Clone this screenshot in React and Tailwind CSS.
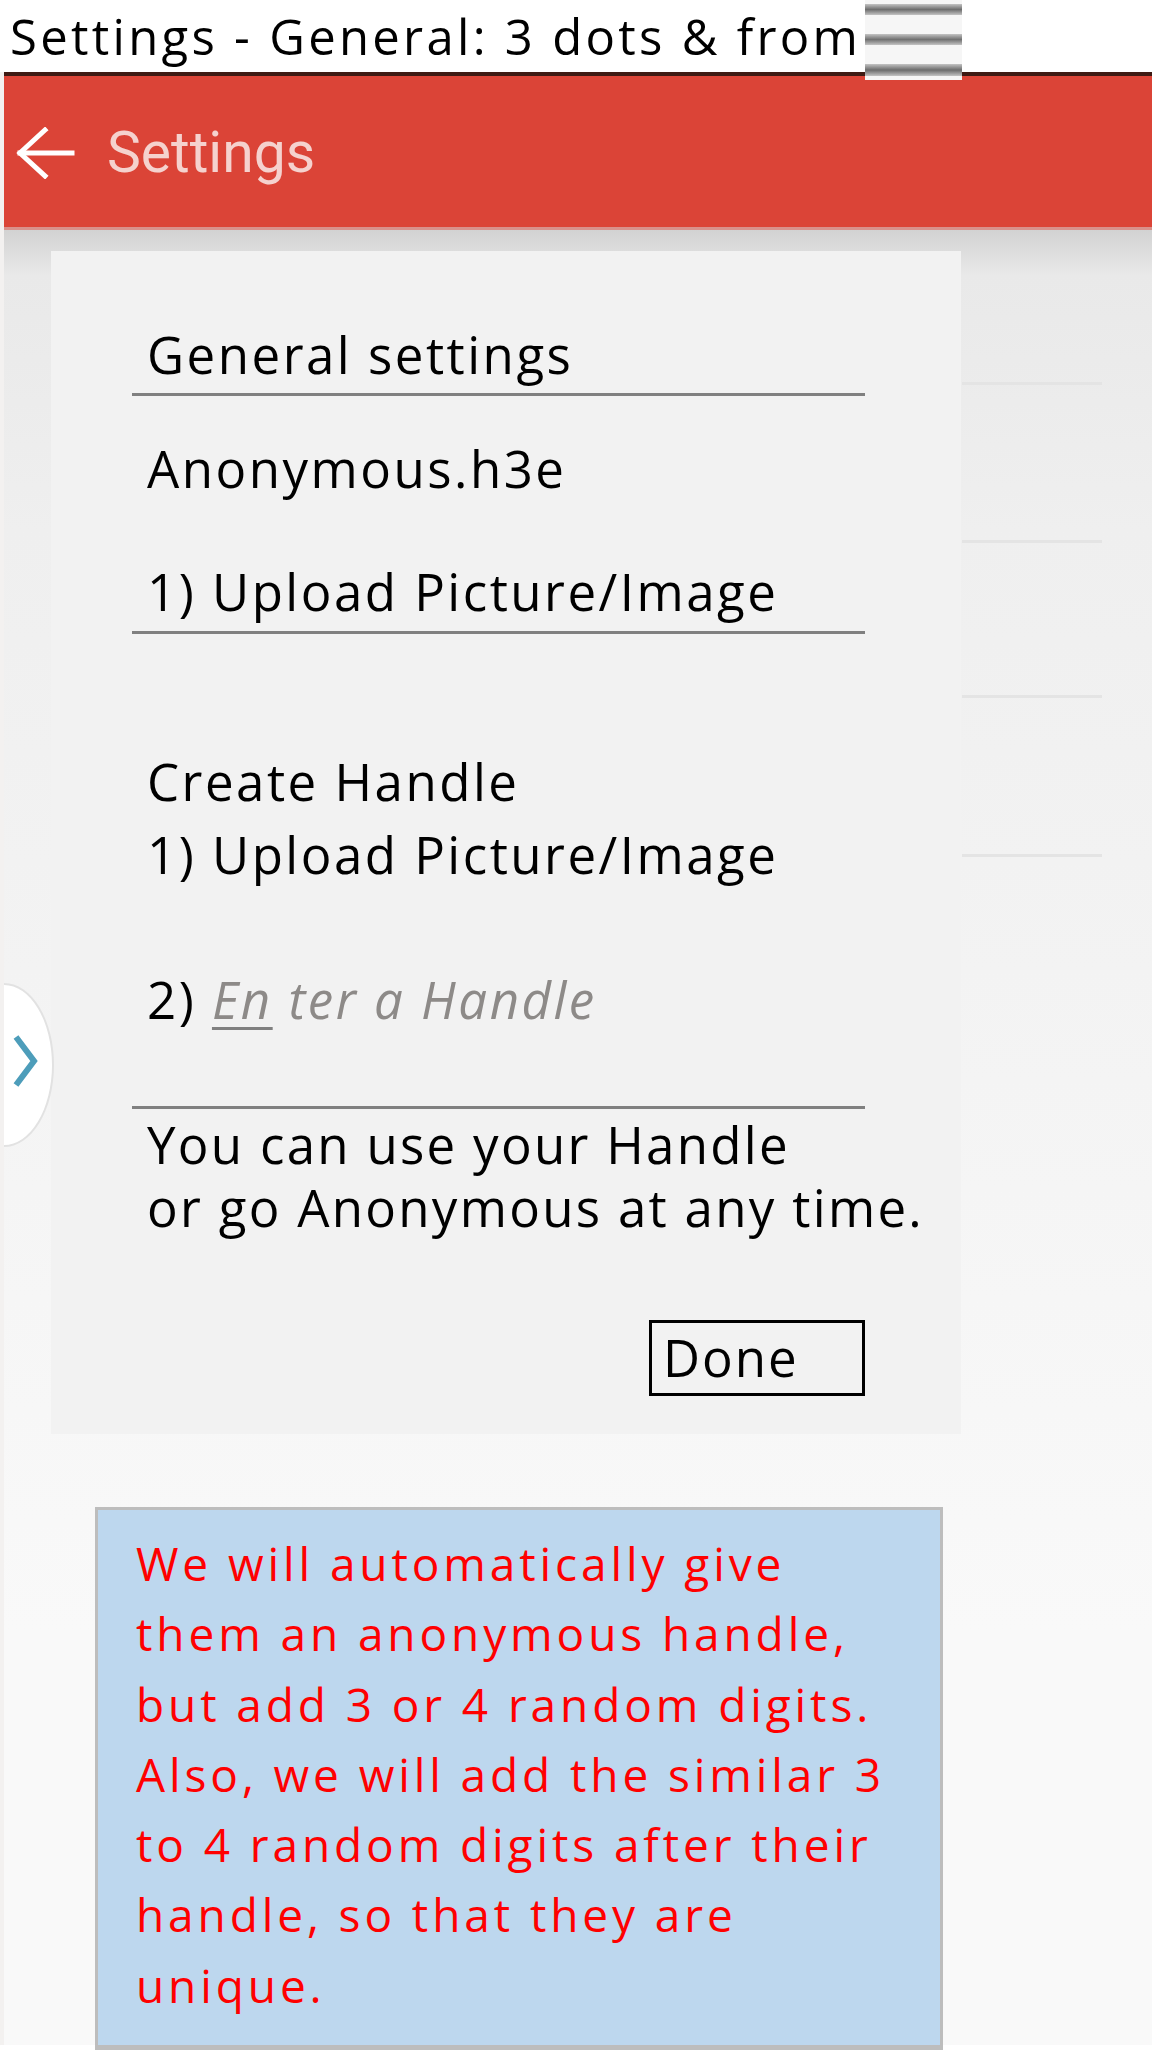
const CardLine = ({ children, className = "" }) => (
  <div className={`text-[51px] leading-[60px] text-black tracking-[2.5px] ${className}`}>{children}</div>
);

const Rule = ({ className = "" }) => <div className={`h-[3px] w-[733px] bg-[#808080] ${className}`} />;

const App = () => {
  return (
    <div className="relative w-[1152px] h-[2072px] bg-white overflow-hidden" style={{ fontFamily: '"Open Sans", "Liberation Sans", sans-serif' }}>
      {/* title strip */}
      <div className="h-[72px] pl-[10px] text-[49px] leading-[72px] tracking-[3.3px] text-black">
        Settings - General: 3 dots &amp; from
      </div>
      <div className="absolute left-[865px] top-0 w-[97px] h-[80px] bg-[#f6f6f6] flex flex-col justify-between py-[4px]">
        <div className="h-[11px] bg-gradient-to-b from-[#c4c4c4] via-[#6f6f6f] to-[#c4c4c4]" />
        <div className="h-[11px] bg-gradient-to-b from-[#c4c4c4] via-[#727272] to-[#c4c4c4]" />
        <div className="h-[12px] bg-gradient-to-b from-[#c4c4c4] via-[#6c6c6c] to-[#c4c4c4]" />
      </div>

      <div className="pl-[4px] bg-[#f3f1f0]">
        <div className="h-[4px] bg-[#3e1a13]" />
        {/* app bar */}
        <div className="h-[154px] bg-[#db4437] border-b-[3px] border-[#d9918b] flex items-center pl-[11px] pt-[2px]">
          <svg width="60" height="52" viewBox="0 0 60 52" fill="none" stroke="#ffffff" strokeWidth="5" strokeLinecap="square">
            <path d="M5 26 H57" />
            <path d="M30 3 L5 26 L30 49" />
          </svg>
          <span className="ml-[32px] text-[57px] leading-[57px] text-[#f5d2ce]" style={{ fontFamily: 'Roboto, "Open Sans", sans-serif' }}>
            Settings
          </span>
        </div>

        {/* body */}
        <div className="relative h-[1815px] bg-[linear-gradient(to_bottom,#d2d2d2_0px,#e9e9e9_45px,#efefef_300px,#f9f9f9_1400px)] pt-[21px] pl-[47px]">
          <div className="flex">
            <div className="w-[910px] bg-[#f2f2f2] pt-[73px] pb-[38px]">
              <CardLine className="pl-[96px]">General settings</CardLine>
              <Rule className="ml-[81px] mt-[9px]" />
              <CardLine className="pl-[96px] mt-[42px]">Anonymous.h3e</CardLine>
              <CardLine className="pl-[96px] mt-[63px]">1) Upload Picture/Image</CardLine>
              <Rule className="ml-[81px] mt-[10px]" />
              <CardLine className="pl-[96px] mt-[117px]">Create Handle</CardLine>
              <CardLine className="pl-[96px] mt-[13px]">1) Upload Picture/Image</CardLine>
              <CardLine className="pl-[96px] mt-[85px]">
                2){" "}
                <span className="italic text-[#8d8a88]">
                  <span className="underline decoration-[3px] underline-offset-[8px] decoration-[#808080]">En</span> ter a Handle
                </span>
              </CardLine>
              <Rule className="ml-[81px] mt-[77px]" />
              <div className="pl-[96px] mt-[4px] text-[51px] leading-[63px] text-black tracking-[2.3px]">
                <div>You can use your Handle</div>
                <div>or go Anonymous at any time.</div>
              </div>
              <div className="flex justify-end pr-[96px] mt-[81px]">
                <div className="w-[216px] h-[76px] border-[3px] border-black pl-[11px] text-[51px] leading-[68px] tracking-[2px] text-black">
                  Done
                </div>
              </div>
            </div>
            <div className="w-[140px] ml-[1px] flex flex-col">
              <div className="mt-[131px] h-[3px] bg-[#e4e4e4]" />
              <div className="mt-[155px] h-[3px] bg-[#e4e4e4]" />
              <div className="mt-[152px] h-[3px] bg-[#e4e4e4]" />
              <div className="mt-[156px] h-[3px] bg-[#e4e4e4]" />
            </div>
          </div>

          {/* note */}
          <div className="ml-[44px] mt-[73px] w-[848px] bg-[#bdd7ee] border-[3px] border-b-[5px] border-[#bdbdbd] pl-[38px] pt-[18px] pb-[25px] text-[46px] leading-[70.3px] text-[#ff0000] tracking-[3.9px]">
            <div>We will automatically give</div>
            <div>them an anonymous handle,</div>
            <div>but add 3 or 4 random digits.</div>
            <div>Also, we will add the similar 3</div>
            <div>to 4 random digits after their</div>
            <div>handle, so that they are</div>
            <div>unique.</div>
          </div>

          {/* side tab */}
          <div className="absolute left-0 top-[753px] w-[50px] h-[164px] bg-white border-2 border-l-0 border-[#e2e2e2] rounded-[0_100%_100%_0/0_50%_50%_0]">
            <svg width="48" height="160" viewBox="0 0 48 160" fill="none" stroke="#4d9dba" strokeWidth="6">
              <path d="M12 52 L30 76 L12 100" />
            </svg>
          </div>
        </div>
      </div>
    </div>
  );
};

export default App;
